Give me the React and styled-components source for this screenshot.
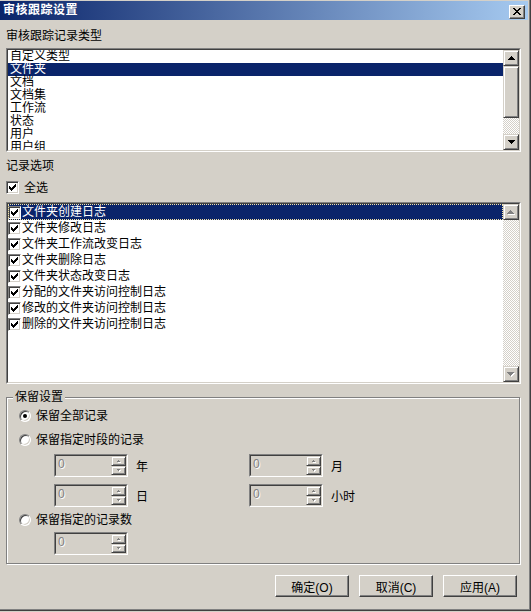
import React from "react";
import styled, { createGlobalStyle } from "styled-components";

const GlobalStyle = createGlobalStyle`
  html, body {
    margin: 0;
    padding: 0;
    background: #d4d0c8;
  }
  body {
    font-family: "Liberation Sans", "Noto Sans CJK SC", sans-serif;
    font-size: 12px;
    color: #000;
  }
`;

const Window = styled.div`
  width: 531px;
  height: 611px;
  box-sizing: border-box;
  padding: 1px 3px 3px 0;
  background: #d4d0c8;
  box-shadow: inset -1px -1px #404040, inset -2px -2px #808080;
  display: flex;
  flex-direction: column;
`;

const TitleBar = styled.div`
  height: 19px;
  flex-shrink: 0;
  display: flex;
  align-items: center;
  padding: 0 3px;
  background: linear-gradient(to right, #0a246a, #a6caf0);
`;

const Title = styled.span`
  color: #fff;
  font-weight: bold;
  font-size: 12px;
  line-height: 19px;
  letter-spacing: 0.5px;
`;

const CloseButton = styled.div`
  margin-left: auto;
  margin-top: 2px;
  width: 16px;
  height: 14px;
  box-sizing: border-box;
  background: #d4d0c8;
  border: 1px solid;
  border-color: #fff #404040 #404040 #fff;
  box-shadow: inset -1px -1px #808080;
  display: flex;
  align-items: center;
  justify-content: center;
`;

const Body = styled.div`
  flex: 1;
  display: flex;
  flex-direction: column;
  padding: 0 7px 0 6px;
`;

const SectionLabel = styled.div`
  height: 14px;
  line-height: 14px;
  margin-top: ${(p) => p.$mt}px;
  white-space: nowrap;
`;

const ListFrame = styled.div`
  margin-top: ${(p) => p.$mt}px;
  height: ${(p) => p.$h}px;
  box-sizing: border-box;
  border: 1px solid;
  border-color: #808080 #fff #fff #808080;
`;

const ListInner = styled.div`
  height: 100%;
  box-sizing: border-box;
  border: 1px solid;
  border-color: #404040 #d4d0c8 #d4d0c8 #404040;
  background: #fff;
  display: flex;
  overflow: hidden;
`;

const Items = styled.div`
  flex: 1;
  display: flex;
  flex-direction: column;
  overflow: hidden;
`;

const TypeItem = styled.div`
  height: 13px;
  line-height: 13px;
  flex-shrink: 0;
  padding-left: 2px;
  white-space: nowrap;
  background: ${(p) => (p.$selected ? "#0a246a" : "transparent")};
  color: ${(p) => (p.$selected ? "#fff" : "#000")};
`;

const OptionItem = styled.div`
  height: 16px;
  flex-shrink: 0;
  display: flex;
  align-items: center;
  gap: 1px;
  white-space: nowrap;
  line-height: 14px;
  background: ${(p) => (p.$selected ? "#0a246a" : "transparent")};
  color: ${(p) => (p.$selected ? "#fff" : "#000")};
  outline: ${(p) => (p.$selected ? "1px dotted #f3e3a6" : "none")};
  outline-offset: -1px;
`;

const Scrollbar = styled.div`
  width: 16px;
  flex-shrink: 0;
  display: flex;
  flex-direction: column;
`;

const raised = `
  box-sizing: border-box;
  background: #d4d0c8;
  border: 1px solid;
  border-color: #d4d0c8 #404040 #404040 #d4d0c8;
  box-shadow: inset 1px 1px #fff, inset -1px -1px #808080;
`;

const ScrollButton = styled.div`
  ${raised}
  height: 16px;
  flex-shrink: 0;
  display: flex;
  align-items: center;
  justify-content: center;
`;

const Thumb = styled.div`
  ${raised}
  height: ${(p) => p.$h}px;
  flex-shrink: 0;
`;

const Track = styled.div`
  flex: 1;
  background-color: #fff;
  background-image: conic-gradient(#d4d0c8 0 25%, #fff 0 50%, #d4d0c8 0 75%, #fff 0);
  background-size: 2px 2px;
`;

const CheckRow = styled.div`
  margin-top: ${(p) => p.$mt}px;
  height: 13px;
  display: flex;
  align-items: center;
  gap: 5px;
  line-height: 14px;
`;

const CheckBox = styled.span`
  width: 13px;
  height: 13px;
  flex-shrink: 0;
  box-sizing: border-box;
  border: 1px solid;
  border-color: #808080 #fff #fff #808080;
  box-shadow: inset 1px 1px #404040, inset -1px -1px #d4d0c8;
  background: #fff;
  display: flex;
  align-items: center;
  justify-content: center;
`;

const GroupBox = styled.fieldset`
  margin: ${(p) => p.$mt}px 1px 0 0;
  padding: 0 0 8px 0;
  min-width: 0;
  border: 1px solid #808080;
  box-shadow: inset 1px 1px #fff, 1px 1px #fff;
  display: flex;
  flex-direction: column;
`;

const Legend = styled.legend`
  margin-left: 6px;
  padding: 0 2px;
  height: 14px;
  line-height: 14px;
  background: #d4d0c8;
`;

const RadioRow = styled.div`
  margin-top: ${(p) => p.$mt}px;
  margin-left: 12px;
  height: 14px;
  display: flex;
  align-items: center;
  gap: 5px;
  line-height: 14px;
  white-space: nowrap;
`;

const Radio = styled.span`
  width: 12px;
  height: 12px;
  flex-shrink: 0;
  box-sizing: border-box;
  border-radius: 50%;
  border: 1px solid;
  border-color: #808080 #fff #fff #808080;
  box-shadow: inset 1px 1px #404040, inset -1px -1px #d4d0c8;
  background: #fff;
  display: flex;
  align-items: center;
  justify-content: center;
  &::after {
    content: "";
    display: ${(p) => (p.$checked ? "block" : "none")};
    width: 4px;
    height: 4px;
    border-radius: 50%;
    background: #000;
  }
`;

const SpinRow = styled.div`
  margin-top: ${(p) => p.$mt}px;
  margin-left: 47px;
  display: grid;
  grid-template-columns: 195px 195px;
`;

const SpinField = styled.div`
  display: flex;
  align-items: center;
  gap: 8px;
  white-space: nowrap;
`;

const SpinEdit = styled.div`
  width: 74px;
  height: 23px;
  box-sizing: border-box;
  border: 1px solid;
  border-color: #808080 #fff #fff #808080;
`;

const SpinInner = styled.div`
  height: 100%;
  box-sizing: border-box;
  border: 1px solid;
  border-color: #404040 #d4d0c8 #d4d0c8 #404040;
  background: #d4d0c8;
  display: flex;
`;

const SpinValue = styled.div`
  flex: 1;
  padding: 1px 0 0 2px;
  color: #808080;
  line-height: 14px;
  text-shadow: 1px 1px #fff;
`;

const SpinButtons = styled.div`
  width: 15px;
  display: flex;
  flex-direction: column;
`;

const SpinHalf = styled.div`
  ${raised}
  height: ${(p) => p.$h}px;
  display: flex;
  align-items: center;
  justify-content: center;
`;

const ButtonRow = styled.div`
  margin-top: 11px;
  margin-right: 4px;
  display: flex;
  justify-content: flex-end;
  gap: 10px;
`;

const Button = styled.button`
  width: 74px;
  height: 22px;
  box-sizing: border-box;
  padding: 0;
  font: inherit;
  font-size: 12px;
  color: #000;
  background: #d4d0c8;
  border: 1px solid;
  border-color: #fff #404040 #404040 #fff;
  box-shadow: inset -1px -1px #808080;
`;

const ArrowUp = ({ color = "#000" }) => (
  <svg width="7" height="4" viewBox="0 0 7 4" shapeRendering="crispEdges">
    <path d="M3 0h1v1H3zM2 1h3v1H2zM1 2h5v1H1zM0 3h7v1H0z" fill={color} />
  </svg>
);

const ArrowDown = ({ color = "#000" }) => (
  <svg width="7" height="4" viewBox="0 0 7 4" shapeRendering="crispEdges">
    <path d="M0 0h7v1H0zM1 1h5v1H1zM2 2h3v1H2zM3 3h1v1H3z" fill={color} />
  </svg>
);

const DisabledArrow = ({ down }) => (
  <svg width="8" height="5" viewBox="0 0 8 5" shapeRendering="crispEdges">
    <g transform="translate(1 1)">
      <path
        d={down ? "M0 0h7v1H0zM1 1h5v1H1zM2 2h3v1H2zM3 3h1v1H3z" : "M3 0h1v1H3zM2 1h3v1H2zM1 2h5v1H1zM0 3h7v1H0z"}
        fill="#fff"
      />
    </g>
    <path
      d={down ? "M0 0h7v1H0zM1 1h5v1H1zM2 2h3v1H2zM3 3h1v1H3z" : "M3 0h1v1H3zM2 1h3v1H2zM1 2h5v1H1zM0 3h7v1H0z"}
      fill="#808080"
    />
  </svg>
);

const TinyArrow = ({ down }) => (
  <svg width="4" height="3" viewBox="0 0 4 3" shapeRendering="crispEdges">
    <path d={down ? "M0 0h3v1H0zM1 1h1v1H1z" : "M1 0h1v1H1zM0 1h3v1H0z"} fill="#fff" transform="translate(1 1)" />
    <path d={down ? "M0 0h3v1H0zM1 1h1v1H1z" : "M1 0h1v1H1zM0 1h3v1H0z"} fill="#808080" />
  </svg>
);

const Check = () => (
  <svg width="7" height="7" viewBox="0 0 7 7" shapeRendering="crispEdges">
    <path
      d="M6 0h1v1H6zM5 1h2v1H5zM0 2h1v1H0zM4 2h3v1H4zM0 3h2v1H0zM3 3h3v1H3zM0 4h5v1H0zM1 5h3v1H1zM2 6h1v1H2z"
      fill="#000"
    />
  </svg>
);

const CloseGlyph = () => (
  <svg width="8" height="7" viewBox="0 0 8 7" shapeRendering="crispEdges">
    <path
      d="M0 0h2v1H0zM6 0h2v1H6zM1 1h2v1H1zM5 1h2v1H5zM2 2h4v1H2zM3 3h2v1H3zM2 4h4v1H2zM1 5h2v1H1zM5 5h2v1H5zM0 6h2v1H0zM6 6h2v1H6z"
      fill="#000"
    />
  </svg>
);

const recordTypes = ["自定义类型", "文件夹", "文档", "文档集", "工作流", "状态", "用户", "用户组"];

const recordOptions = [
  "文件夹创建日志",
  "文件夹修改日志",
  "文件夹工作流改变日志",
  "文件夹删除日志",
  "文件夹状态改变日志",
  "分配的文件夹访问控制日志",
  "修改的文件夹访问控制日志",
  "删除的文件夹访问控制日志",
];

const Spin = ({ label }) => (
  <SpinField>
    <SpinEdit>
      <SpinInner>
        <SpinValue>0</SpinValue>
        <SpinButtons>
          <SpinHalf $h={10}>
            <TinyArrow />
          </SpinHalf>
          <SpinHalf $h={9}>
            <TinyArrow down />
          </SpinHalf>
        </SpinButtons>
      </SpinInner>
    </SpinEdit>
    {label}
  </SpinField>
);

const App = () => {
  return (
    <Window>
      <GlobalStyle />
      <TitleBar>
        <Title>审核跟踪设置</Title>
        <CloseButton>
          <CloseGlyph />
        </CloseButton>
      </TitleBar>
      <Body>
        <SectionLabel $mt={9}>审核跟踪记录类型</SectionLabel>
        <ListFrame $mt={5} $h={104}>
          <ListInner>
            <Items>
              {recordTypes.map((t) => (
                <TypeItem key={t} $selected={t === "文件夹"}>
                  {t}
                </TypeItem>
              ))}
            </Items>
            <Scrollbar>
              <ScrollButton>
                <ArrowUp />
              </ScrollButton>
              <Thumb $h={52} />
              <Track />
              <ScrollButton>
                <ArrowDown />
              </ScrollButton>
            </Scrollbar>
          </ListInner>
        </ListFrame>

        <SectionLabel $mt={7}>记录选项</SectionLabel>
        <CheckRow $mt={8}>
          <CheckBox>
            <Check />
          </CheckBox>
          全选
        </CheckRow>
        <ListFrame $mt={8} $h={182}>
          <ListInner>
            <Items>
              {recordOptions.map((o, i) => (
                <OptionItem key={o} $selected={i === 0}>
                  <CheckBox>
                    <Check />
                  </CheckBox>
                  {o}
                </OptionItem>
              ))}
            </Items>
            <Scrollbar>
              <ScrollButton>
                <DisabledArrow />
              </ScrollButton>
              <Track />
              <ScrollButton>
                <DisabledArrow down />
              </ScrollButton>
            </Scrollbar>
          </ListInner>
        </ListFrame>

        <GroupBox $mt={6}>
          <Legend>保留设置</Legend>
          <RadioRow $mt={5}>
            <Radio $checked />
            保留全部记录
          </RadioRow>
          <RadioRow $mt={10}>
            <Radio />
            保留指定时段的记录
          </RadioRow>
          <SpinRow $mt={7}>
            <Spin label="年" />
            <Spin label="月" />
          </SpinRow>
          <SpinRow $mt={7}>
            <Spin label="日" />
            <Spin label="小时" />
          </SpinRow>
          <RadioRow $mt={6}>
            <Radio />
            保留指定的记录数
          </RadioRow>
          <SpinRow $mt={5}>
            <Spin />
          </SpinRow>
        </GroupBox>

        <ButtonRow>
          <Button>确定(O)</Button>
          <Button>取消(C)</Button>
          <Button>应用(A)</Button>
        </ButtonRow>
      </Body>
    </Window>
  );
};

export default App;
